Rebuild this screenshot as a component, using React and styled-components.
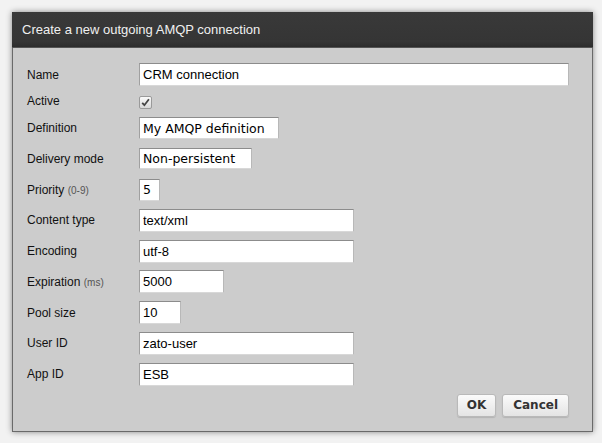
import React from "react";
import styled, { createGlobalStyle } from "styled-components";

const Global = createGlobalStyle`
  html, body { margin: 0; padding: 0; background: #f2f2f2; }
  body { font-family: "Liberation Sans", Arial, sans-serif; }
`;

const Page = styled.div`
  padding: 12px 9px 12px 12px;
  width: 602px;
  height: 443px;
  box-sizing: border-box;
`;

const Dialog = styled.div`
  width: 581px;
  box-shadow: 0 0 6px rgba(0, 0, 0, 0.45);
  border: 1px solid #6a6a6a;
  border-top: none;
  box-sizing: border-box;
  background: #cccccc;
`;

const Header = styled.div`
  height: 35px;
  background: linear-gradient(#393939, #353535 85%, #2c2c2c);
  color: #f0f0f0;
  font-size: 13px;
  display: flex;
  align-items: center;
  padding-left: 10px;
  margin: 0 -1px;
  border-bottom: 1px solid #555;
`;

const Body = styled.div`
  padding: 15px 23px 14px 14px;
  display: flex;
  flex-direction: column;
  gap: 7.75px;
`;

const Row = styled.div`
  display: grid;
  grid-template-columns: 112px 1fr;
  align-items: center;
  min-height: ${(p) => p.$h || 23}px;
`;

const Label = styled.label`
  font-size: 12px;
  color: #111;
`;

const Hint = styled.span`
  font-size: 10px;
  color: #555;
`;

const Field = styled.input`
  box-sizing: border-box;
  width: ${(p) => (p.$w ? `${p.$w}px` : "100%")};
  height: ${(p) => p.$h || 23}px;
  margin: 0;
  padding: 0 3px;
  border: 1px solid;
  border-color: #8c8c8c #b8b8b8 #d8d8d8 #a0a0a0;
  background: #fff;
  color: #000;
  font-family: ${(p) =>
    p.$dv ? '"DejaVu Sans", Verdana, sans-serif' : '"Liberation Sans", Arial, sans-serif'};
  font-size: ${(p) => (p.$dv ? "12.5px" : "13px")};
  outline: none;
`;

const Check = styled.span`
  width: 11px;
  height: 11px;
  border: 1px solid #9a9a9a;
  border-radius: 2px;
  background: linear-gradient(#fafafa, #d8d8d8);
  display: flex;
  align-items: center;
  justify-content: center;
  margin-top: 2px;
`;

const Buttons = styled.div`
  display: flex;
  justify-content: flex-end;
  gap: 6px;
  margin-top: 0.25px;
`;

const Button = styled.button`
  height: 23px;
  padding: 0 ${(p) => p.$px || 10}px;
  border: 1px solid #b9b9b9;
  border-radius: 3px;
  background: linear-gradient(#fbfbfb, #e4e4e4);
  box-shadow: 0 1px 1px rgba(0, 0, 0, 0.12);
  font-family: "DejaVu Sans", Verdana, sans-serif;
  font-weight: bold;
  font-size: 12px;
  color: #333;
`;

const fields = [
  { label: "Definition", value: "My AMQP definition", w: 140, h: 22, dv: true },
  { label: "Delivery mode", value: "Non-persistent", w: 113, h: 21, dv: true },
  { label: "Priority", hint: "(0-9)", value: "5", w: 21, h: 22, dv: true },
  { label: "Content type", value: "text/xml", w: 215 },
  { label: "Encoding", value: "utf-8", w: 215 },
  { label: "Expiration", hint: "(ms)", value: "5000", w: 85 },
  { label: "Pool size", value: "10", w: 42 },
  { label: "User ID", value: "zato-user", w: 215 },
  { label: "App ID", value: "ESB", w: 215 },
];

export default function App() {
  return (
    <>
      <Global />
      <Page>
        <Dialog>
          <Header>Create a new outgoing AMQP connection</Header>
          <Body>
            <Row>
              <Label>Name</Label>
              <Field defaultValue="CRM connection" readOnly />
            </Row>
            <Row $h={12}>
              <Label>Active</Label>
              <Check>
                <svg width="9" height="9" viewBox="0 0 9 9">
                  <path d="M1.2 4.8 L3.4 7.2 L7.9 1.3" fill="none" stroke="#444" strokeWidth="1.8" />
                </svg>
              </Check>
            </Row>
            {fields.map((f) => (
              <Row key={f.label}>
                <Label>
                  {f.label}
                  {f.hint && (
                    <>
                      {" "}
                      <Hint>{f.hint}</Hint>
                    </>
                  )}
                </Label>
                <Field defaultValue={f.value} readOnly $w={f.w} $h={f.h} $dv={f.dv} />
              </Row>
            ))}
            <Buttons>
              <Button $px={9}>OK</Button>
              <Button $px={10}>Cancel</Button>
            </Buttons>
          </Body>
        </Dialog>
      </Page>
    </>
  );
}
